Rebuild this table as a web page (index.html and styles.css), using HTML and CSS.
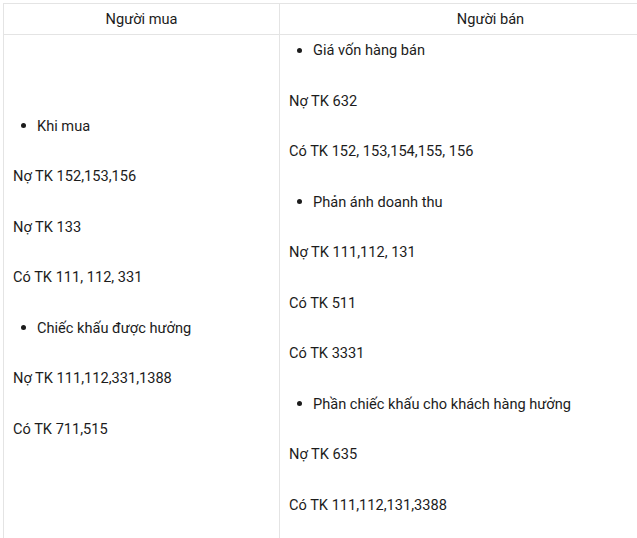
FILE: index.html
```
<!DOCTYPE html>
<html lang="vi">
<head>
<meta charset="utf-8">
<title>Người mua / Người bán</title>
<link rel="stylesheet" href="styles.css">
</head>
<body>
<table class="grid">
  <thead>
    <tr>
      <th class="col-buyer">Người mua</th>
      <th class="col-seller">Người bán</th>
    </tr>
  </thead>
  <tbody>
    <tr>
      <td class="cell">
        <div class="entries">
          <ul class="bullet"><li>Khi mua</li></ul>
          <p>Nợ TK 152,153,156</p>
          <p>Nợ TK 133</p>
          <p>Có TK 111, 112, 331</p>
          <ul class="bullet"><li>Chiếc khấu được hưởng</li></ul>
          <p>Nợ TK 111,112,331,1388</p>
          <p>Có TK 711,515</p>
        </div>
      </td>
      <td class="cell">
        <div class="entries">
          <ul class="bullet"><li>Giá vốn hàng bán</li></ul>
          <p>Nợ TK 632</p>
          <p>Có TK 152, 153,154,155, 156</p>
          <ul class="bullet"><li>Phản ánh doanh thu</li></ul>
          <p>Nợ TK 111,112, 131</p>
          <p>Có TK 511</p>
          <p>Có TK 3331</p>
          <ul class="bullet"><li>Phần chiếc khấu cho khách hàng hưởng</li></ul>
          <p>Nợ TK 635</p>
          <p>Có TK 111,112,131,3388</p>
        </div>
      </td>
    </tr>
  </tbody>
</table>
</body>
</html>
```
FILE: styles.css
```
html, body {
  margin: 0;
  padding: 0;
  background: #ffffff;
  overflow: hidden;
}
body {
  font-family: Roboto, "Noto Sans", Arial, sans-serif;
  font-size: 14.6px;
  color: #1c1c1c;
  padding: 3px 0 0 3px;
}
.grid {
  border-collapse: collapse;
  width: 696px;
  table-layout: fixed;
}
.col-buyer { width: 275px; }
.col-seller { width: 421px; }
.grid th {
  border: 1px solid #e4e4e4;
  font-weight: 400;
  height: 30px;
  padding: 0;
  text-align: center;
  vertical-align: middle;
  line-height: 20px;
}
.cell {
  border: 1px solid #e4e4e4;
  padding: 3px 9px 40px 9px;
  vertical-align: middle;
}
.entries {
  display: flex;
  flex-direction: column;
  gap: 26.5px;
}
.entries p,
.bullet {
  margin: 0;
  line-height: 24px;
}
.bullet {
  padding-left: 8px;
  list-style: none;
}
.bullet li {
  display: flex;
  align-items: center;
  gap: 11px;
}
.bullet li::before {
  content: "";
  width: 5px;
  height: 5px;
  border-radius: 50%;
  background: #1c1c1c;
  flex: none;
}
```
